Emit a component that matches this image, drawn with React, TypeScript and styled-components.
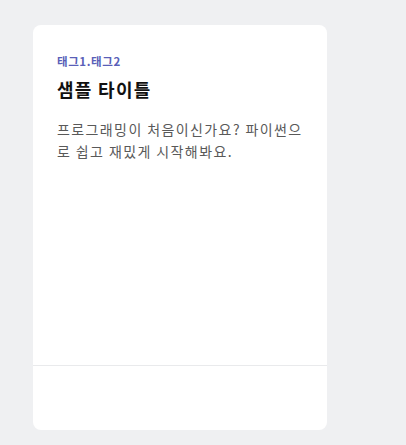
import React from "react";
import styled, { createGlobalStyle } from "styled-components";

const Global = createGlobalStyle`
  html, body { margin: 0; padding: 0; background: #eff0f2; }
  body { font-family: "Noto Sans CJK KR", "Noto Sans", sans-serif; }
`;

const Page = styled.div`
  padding: 25px 0 15px 33px;
`;

const Card = styled.article`
  width: 294px;
  height: 405px;
  background: #ffffff;
  border-radius: 8px;
  display: flex;
  flex-direction: column;
  overflow: hidden;
`;

const Body = styled.div`
  flex: 1;
  padding: 27px 24px 0 24px;
  border-bottom: 1px solid #e9eaec;
`;

const Tags = styled.div`
  font-size: 11.5px;
  font-weight: 700;
  color: #5a5fb8;
  line-height: 18px;
  letter-spacing: 0.6px;
`;

const Title = styled.h2`
  margin: 5px 0 0 0;
  font-size: 18px;
  font-weight: 700;
  color: #111111;
  line-height: 28px;
  letter-spacing: 1.3px;
`;

const Desc = styled.p`
  margin: 15px 0 0 0;
  font-size: 14px;
  color: #595959;
  line-height: 22px;
  letter-spacing: 1.4px;
  word-break: break-all;
`;

const Footer = styled.div`
  height: 64px;
`;

export default function App() {
  return (
    <>
      <Global />
      <Page>
        <Card>
          <Body>
            <Tags>태그1.태그2</Tags>
            <Title>샘플 타이틀</Title>
            <Desc>프로그래밍이 처음이신가요? 파이썬으로 쉽고 재밌게 시작해봐요.</Desc>
          </Body>
          <Footer />
        </Card>
      </Page>
    </>
  );
}
